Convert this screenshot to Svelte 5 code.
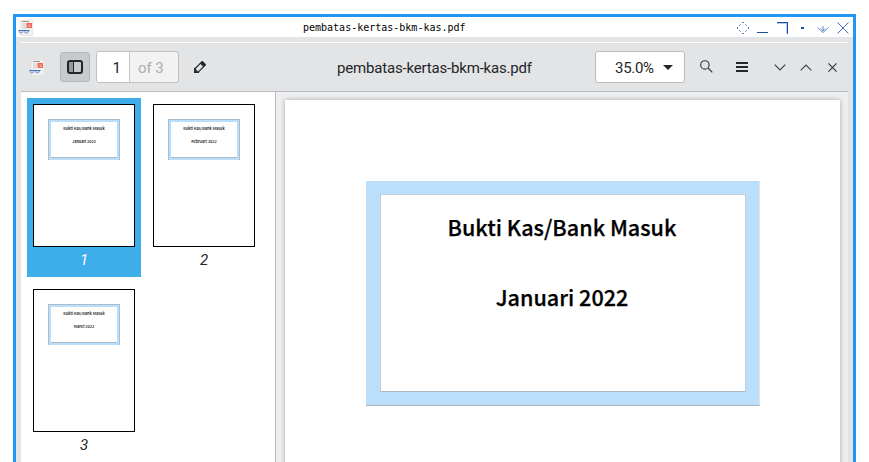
<script>
  const pages = [
    { number: 1, month: 'Januari 2022' },
    { number: 2, month: 'Februari 2022' },
    { number: 3, month: 'Maret 2022' }
  ];
  const current = 1;
  const file = 'pembatas-kertas-bkm-kas.pdf';
</script>

{#snippet appIcon()}
  <svg class="app-icon" width="17" height="17" viewBox="0 0 17 17">
    <rect x="2" y="1" width="13" height="15.5" rx="1" fill="#f3f0ee" stroke="#e0dddb" stroke-width=".5" />
    <path d="M4 2.500h7" stroke="#99958f" />
    <path d="M4 5h4M4 7h4M4 9h4" stroke="#d0ccc9" />
    <rect x="8.5" y="4" width="5.5" height="5" fill="#ed655a" />
    <path d="M10 7.500l2-2M10.5 6h2M11 7.500h2" stroke="#f9c5bf" stroke-width=".7" />
    <path d="M.5 11.500h11" stroke="#4577b8" stroke-width="1" />
    <path d="M1.2 12v1q0 1 1.800 1t2-1.800M6.200 12q0 2 2 2t2.500-2" fill="#c7d7ec" stroke="#668fc6" stroke-width=".8" />
  </svg>
{/snippet}

<div class="window">
  <header class="title">
    <span class="title-icon">{@render appIcon()}</span>
    <span class="title-text">{file}</span>
    <svg class="window-buttons" width="112" height="12" viewBox="0 0 112 12" fill="none" stroke="#1d4fa3" shape-rendering="crispEdges">
      <path d="M5 .5h2M5 11.500h2M.5 5v2M11.500 5v2" stroke="#527bc0" />
      <path d="M3 2.500h1M8 2.500h1M3 9.500h1M8 9.500h1M2.500 3v1M9.500 3v1M2.500 8v1M9.500 8v1" stroke="#86a2d2" />
      <path d="M20 10.500h11M40 .5h11" />
      <path d="M40 1.500h10M49.500 1v10" stroke="#b8c9e4" />
      <path d="M50.500 0v12" />
      <rect x="64" y="5" width="3" height="2" fill="#1d4fa3" stroke="none" />
      <g stroke="#557bbd" shape-rendering="auto">
        <path d="M80.500 5.500l5.500 5 5.500-5M86 4v5M84 6.500l2 2 2-2" stroke-width=".9" />
        <path d="M100.500 .5l11 11M111.500 .5l-11 11" stroke="#416db6" />
      </g>
    </svg>
  </header>

  <div class="content">
    <nav class="toolbar">
      <span class="tool-icon">{@render appIcon()}</span>
      <button class="side-toggle" aria-label="Sidebar">
        <svg width="16" height="14" viewBox="0 0 16 14">
          <path d="M2 1h4v12H2z" fill="#97999c" />
          <rect x="1" y="1" width="14" height="12" rx="2" fill="none" stroke="#232629" stroke-width="2" />
          <path d="M6.500 1v12" stroke="#232629" />
        </svg>
      </button>
      <div class="page-select"><span class="current">{current}</span><span class="total">of {pages.length}</span></div>
      <svg class="pencil" width="12" height="12" viewBox="0 0 12 12" fill="none" stroke="#232629" stroke-width="1.200">
        <path d="M.7 11.300V8L7.800.900q.4-.4.900 0l2.400 2.400q.4.500 0 .9L4 11.300z" />
        <path d="M.7 8L4 11.300H.7z" fill="#e3e4e6" />
        <path d="M.7 9.800l1.500 1.500H.7zM6.200 2.500l1.600-1.600q.4-.4.900 0l2.400 2.400q.4.500 0 .9L9.500 5.800z" fill="#232629" stroke-width=".5" />
      </svg>
      <h1>{file}</h1>
      <div class="zoom">
        <span>35.0%</span>
        <svg width="10" height="5" viewBox="0 0 10 5"><path d="M0 0h10L5 5z" fill="#232629" /></svg>
      </div>
      <svg class="search" width="13" height="13" viewBox="0 0 13 13" fill="none" stroke="#34373a" stroke-width="1.150"><circle cx="4.900" cy="4.900" r="4.200" /><path d="M8 8l4.300 4.300" /></svg>
      <svg class="menu" width="12" height="10" viewBox="0 0 12 10" stroke="#232629" stroke-width="2"><path d="M0 1h12M0 5h12M0 9h12" /></svg>
      <svg class="down" width="12" height="7" viewBox="0 0 12 7" fill="none" stroke="#3e4144" stroke-width="1.150"><path d="M.7.700L6 6 11.300.700" /></svg>
      <svg class="up" width="12" height="7" viewBox="0 0 12 7" fill="none" stroke="#3e4144" stroke-width="1.150"><path d="M.7 6.300L6 1l5.300 5.300" /></svg>
      <svg class="close" width="9" height="9" viewBox="0 0 9 9" stroke="#34373a" stroke-width="1.150"><path d="M.4.400l8.200 8.200M8.600.400L.4 8.600" /></svg>
    </nav>

    <main>
      <aside>
        {#each pages as page}
          <figure class:selected={page.number === current}>
            <div class="thumb">
              <div class="mini">
                <div class="mini-text">
                  <span>Bukti Kas/Bank Masuk</span>
                  <span>{page.month}</span>
                </div>
              </div>
            </div>
            <figcaption>{page.number}</figcaption>
          </figure>
        {/each}
      </aside>
      <section class="viewer">
        <article class="page">
          <div class="card">
            <div class="card-inner">
              <p>Bukti Kas/Bank Masuk</p>
              <p>Januari 2022</p>
            </div>
          </div>
        </article>
      </section>
    </main>
  </div>
</div>

<style>
  :global(body) { background: #fff; overflow: hidden; }
  * { box-sizing: border-box; }
  svg { display: block; flex: none; }
  .window {
    width: 843px;
    height: 448px;
    margin: 14px 0 0 13px;
    border: 3px solid #2296f3;
    border-bottom: 0;
    background: #e3e4e6;
    font-family: Roboto, sans-serif;
    color: #232629;
    overflow: hidden;
  }
  .title { height: 20px; background: #fff; display: flex; }
  .title-icon { width: 17px; margin: 2px 0 0 2px; }
  .title-text {
    width: 164px;
    margin-left: 268px;
    font: 10px/21px "DejaVu Sans Mono", monospace;
    color: #000;
    white-space: nowrap;
  }
  .window-buttons { margin: 5px 4px 0 auto; }
  .content { margin: 5px 5px 0; border-top: 1px solid #fff; }
  .toolbar {
    height: 49px;
    display: flex;
    align-items: center;
    border-bottom: 1px solid #babcbe;
    font-size: 15px;
  }
  .tool-icon { margin-left: 8px; width: 17px; }
  .side-toggle {
    width: 30px;
    height: 30px;
    margin-left: 14px;
    padding: 0;
    display: grid;
    place-items: center;
    background: #c9cacd;
    border: 1px solid #b4b6b8;
    border-radius: 3px;
  }
  .page-select {
    width: 83px;
    height: 32px;
    margin-left: 6px;
    display: flex;
    line-height: 32px;
    border: 1px solid #bdbfc1;
    border-radius: 3px;
    background: #f2f2f3;
    overflow: hidden;
  }
  .current { width: 33px; padding-right: 8px; background: #fff; border-right: 1px solid #c5c7c9; text-align: right; }
  .total { padding-left: 8px; color: #acadae; letter-spacing: -.1px; }
  .pencil { margin-left: 15px; }
  h1 { width: 197px; margin: 2px 0 0 131px; font-size: 15px; font-weight: 400; letter-spacing: -.18px; white-space: nowrap; }
  .zoom {
    width: 90px;
    height: 32px;
    margin-left: 61px;
    padding: 1px 11px 0 19px;
    display: flex;
    align-items: center;
    justify-content: space-between;
    background: #fff;
    border: 1px solid #b9bbbd;
    border-radius: 3px;
    letter-spacing: -.3px;
  }
  .search { margin: 0 0 1px 14.500px; }
  .menu { margin-left: 23.500px; }
  .down { margin-left: 26px; }
  .up { margin-left: 14px; }
  .close { margin-left: 15.500px; }
  main { height: 370px; display: flex; }
  aside {
    width: 255px;
    padding: 6px;
    display: flex;
    flex-wrap: wrap;
    align-content: flex-start;
    gap: 6px;
    background: #fff;
    border-right: 1px solid #babcbe;
  }
  figure { width: 114px; height: 179px; margin: 0; padding: 6px; }
  .selected { background: #3daee9; color: #fff; }
  .thumb { width: 102px; height: 143px; padding: 14px; background: #fff; border: 1px solid #000; }
  .mini {
    width: 72px;
    height: 41px;
    padding-top: 5px;
    background: #fff;
    border: 1px solid #a9bdcd;
    border-bottom: 0;
    box-shadow: inset 0 0 0 2px #bbdefb, inset 0 -3px #a9bdcd;
    color: #000;
  }
  .mini-text {
    width: 350px;
    transform: scale(.2);
    transform-origin: 0 0;
    font: 500 19.500px/35px "Noto Sans CJK JP", sans-serif;
    text-align: center;
  }
  .mini span { display: block; white-space: nowrap; }
  .mini span + span { margin-top: 29px; }
  figcaption { margin-top: 4px; text-align: center; font-size: 15px; line-height: 18px; font-style: italic; }
  .thumb { overflow: hidden; }
  .viewer { flex: 1; padding: 8px 8px 0 9px; background: #eeeff1; overflow: hidden; }
  .page { width: 555px; height: 500px; padding: 81px; background: #fff; box-shadow: 0 0 5px #a6a9ac; }
  .card {
    width: 394px;
    height: 225px;
    padding: 13px 14px 14px;
    background: #bbdefb;
    border-right: 1px solid #dce4e9;
    border-bottom: 1px solid #a7b6c2;
  }
  .card-inner {
    width: 366px;
    height: 198px;
    padding: 14px 2px 0 0;
    background: #fff;
    border: 1px solid #bed0dd;
    border-bottom-color: #abb7c1;
  }
  p {
    height: 35px;
    margin: 0 0 35px;
    text-align: center;
    font: 500 21.600px/35px "Noto Sans CJK JP", sans-serif;
    -webkit-text-stroke: .25px #000;
    color: #000;
  }
</style>
